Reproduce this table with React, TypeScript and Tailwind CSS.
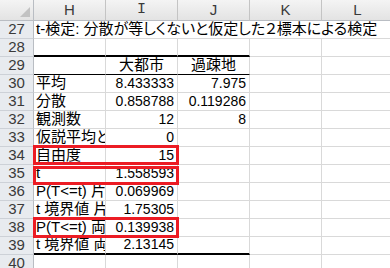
import clsx from 'clsx';

type Edge = 'grid' | 'thin' | 'thick';

type Row = {
  n: number;
  title?: string;
  h?: string;
  i?: string;
  j?: string;
  center?: boolean;
  edge?: Edge;
};

const ROWS: Row[] = [
  { n: 27, title: 't-検定: 分散が等しくないと仮定した２標本による検定' },
  { n: 28, edge: 'thick' },
  { n: 29, i: '大都市', j: '過疎地', center: true, edge: 'thin' },
  { n: 30, h: '平均', i: '8.433333', j: '7.975' },
  { n: 31, h: '分散', i: '0.858788', j: '0.119286' },
  { n: 32, h: '観測数', i: '12', j: '8' },
  { n: 33, h: '仮説平均との差異', i: '0' },
  { n: 34, h: '自由度', i: '15' },
  { n: 35, h: 't', i: '1.558593' },
  { n: 36, h: 'P(T<=t) 片側', i: '0.069969' },
  { n: 37, h: 't 境界値 片側', i: '1.75305' },
  { n: 38, h: 'P(T<=t) 両側', i: '0.139938' },
  { n: 39, h: 't 境界値 両側', i: '2.13145', edge: 'thick' },
  { n: 40 },
];

const COLS = ['H', 'I', 'J', 'K', 'L'];

const FONT = "font-['Liberation_Sans','Noto_Sans_CJK_JP',sans-serif] [font-feature-settings:'palt']";

// red highlight boxes over H:I of rows 34, 35 and 38
const BOXES = [
  { top: 145, height: 20 },
  { top: 166, height: 19 },
  { top: 217, height: 21 },
];

function Cell({
  children,
  edge = 'grid',
  right,
  center,
  wide,
}: {
  children?: React.ReactNode;
  edge?: Edge;
  right?: boolean;
  center?: boolean;
  wide?: boolean;
}) {
  const numeric = right && !center;
  return (
    <div
      className={clsx(
        'h-[18px] shrink-0 flex items-end overflow-hidden whitespace-nowrap pb-[1px] text-black',
        wide ? 'w-[360px]' : 'w-[72px] border-r border-r-[#d9d9d9]',
        edge === 'grid' && 'border-b border-b-[#d9d9d9]',
        edge === 'thin' && 'border-b border-b-black',
        edge === 'thick' && 'border-b-2 border-b-black',
        center ? 'justify-center text-[15px]' : numeric ? 'justify-end pr-[3px] text-[14px]' : 'pl-[2px] text-[15px]',
      )}
    >
      <span className="leading-[16px]">{children}</span>
    </div>
  );
}

export default function App() {
  return (
    <div className={clsx('relative w-[390px] h-[268px] overflow-hidden bg-white', FONT)}>
      {/* column header */}
      <div className="flex h-[21px]">
        <div className="w-[34px] shrink-0 flex items-end justify-end border-r border-b border-[#b9bdc3] bg-linear-to-b from-[#f4f4f4] to-[#e3e3e3] pr-[3px] pb-[3px]">
          <svg width="10" height="10" viewBox="0 0 10 10">
            <polygon points="10,0 10,10 0,10" fill="#c2c2c2" />
          </svg>
        </div>
        {COLS.map((c) => (
          <div
            key={c}
            className="w-[72px] shrink-0 flex items-center justify-center border-r border-b border-r-[#c4c4c4] border-b-[#b9bdc3] bg-linear-to-b from-[#f4f4f4] to-[#e3e3e3] text-[15px] text-[#3a3a3a]"
          >
            <span className={clsx(c === 'I' && "font-['Liberation_Mono',monospace]")}>{c}</span>
          </div>
        ))}
      </div>

      {/* rows */}
      {ROWS.map((r) => (
        <div key={r.n} className="flex">
          <div className="w-[34px] h-[18px] shrink-0 flex items-center justify-center border-r border-b border-r-[#b9bdc3] border-b-[#cdd1d7] bg-[#e8ebef] text-[15px] text-[#3a3a3a]">
            {r.n}
          </div>
          {r.title ? (
            <Cell wide>{r.title}</Cell>
          ) : (
            <>
              <Cell edge={r.edge}>{r.h}</Cell>
              <Cell edge={r.edge} right center={r.center}>{r.i}</Cell>
              <Cell edge={r.edge} right center={r.center}>{r.j}</Cell>
              <Cell />
              <Cell />
            </>
          )}
        </div>
      ))}

      {BOXES.map((b) => (
        <div
          key={b.top}
          className="absolute left-[33px] w-[146px] border-[3px] border-[#ec1c24]"
          style={{ top: b.top, height: b.height }}
        />
      ))}
    </div>
  );
}
